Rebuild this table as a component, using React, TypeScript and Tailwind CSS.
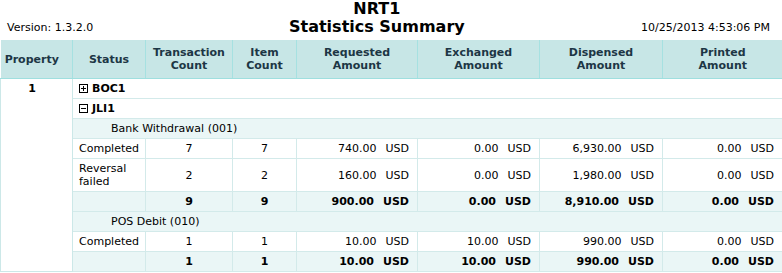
import React from "react";

const font = { fontFamily: '"DejaVu Sans", Verdana, sans-serif' };

function Box({ open }: { open: boolean }) {
  return (
    <svg width="9" height="9" viewBox="0 0 9 9" className="inline-block mr-[4px] align-[-1px]">
      <rect x="0.5" y="0.5" width="8" height="8" fill="white" stroke="#000" strokeWidth="1" />
      <line x1="2" y1="4.5" x2="7" y2="4.5" stroke="#000" strokeWidth="1" />
      {!open && <line x1="4.5" y1="2" x2="4.5" y2="7" stroke="#000" strokeWidth="1" />}
    </svg>
  );
}

type Row = { status: string; t: string; i: string; r: string; e: string; d: string; p: string };

const td = "border border-[#d3eaea] py-[3px] align-middle";

function Amount({ v, bold }: { v: string; bold?: boolean }) {
  return (
    <td className={`${td} text-right pr-[8px] ${bold ? "font-bold" : ""}`}>
      {v}
      <span className="ml-[9px]">USD</span>
    </td>
  );
}

function DataRow({ row }: { row: Row }) {
  return (
    <tr className="bg-white">
      <td className={`${td} pl-[6px] text-left`}>{row.status}</td>
      <td className={`${td} text-center`}>{row.t}</td>
      <td className={`${td} text-center`}>{row.i}</td>
      <Amount v={row.r} />
      <Amount v={row.e} />
      <Amount v={row.d} />
      <Amount v={row.p} />
    </tr>
  );
}

function TotalRow({ row }: { row: Row }) {
  return (
    <tr className="bg-[#eaf6f6] font-bold">
      <td className={`${td}`}></td>
      <td className={`${td} text-center`}>{row.t}</td>
      <td className={`${td} text-center`}>{row.i}</td>
      <Amount v={row.r} bold />
      <Amount v={row.e} bold />
      <Amount v={row.d} bold />
      <Amount v={row.p} bold />
    </tr>
  );
}

function GroupRow({ label }: { label: string }) {
  return (
    <tr className="bg-[#eaf6f6]">
      <td colSpan={7} className="border-y border-[#d3eaea] border-r border-r-[#d3eaea] py-[3px] pl-[38px]">
        {label}
      </td>
    </tr>
  );
}

export default function App() {
  const th = "border-r border-[#a6e1e1] border-b border-b-[#9fdfdf] py-[6px] font-bold text-center align-middle text-[#1d3645]";
  return (
    <div className="w-[782px] bg-white text-black text-[11px] leading-[13px]" style={font}>
      <div className="flex items-end h-[40px]">
        <div className="w-[289px] shrink-0 pl-[7px] mb-[6px]">Version: 1.3.2.0</div>
        <div className="flex flex-col items-center text-[16px] leading-[18px] font-bold pb-[4px]">
          <div>NRT1</div>
          <div>Statistics Summary</div>
        </div>
        <div className="flex-1 text-right pr-[12px] mb-[6px]">10/25/2013 4:53:06 PM</div>
      </div>
      <table className="table-fixed border-collapse w-[782px]">
        <colgroup>
          <col className="w-[72px]" />
          <col className="w-[73px]" />
          <col className="w-[87px]" />
          <col className="w-[64px]" />
          <col className="w-[121px]" />
          <col className="w-[122px]" />
          <col className="w-[123px]" />
          <col className="w-[120px]" />
        </colgroup>
        <thead>
          <tr className="bg-[#c7e6e6]">
            <th className={`${th} pr-[9px]`}>Property</th>
            <th className={th}>Status</th>
            <th className={th}>Transaction<br />Count</th>
            <th className={th}>Item<br />Count</th>
            <th className={th}>Requested<br />Amount</th>
            <th className={th}>Exchanged<br />Amount</th>
            <th className={th}>Dispensed<br />Amount</th>
            <th className={`${th} border-r-0`}>Printed<br />Amount</th>
          </tr>
        </thead>
        <tbody>
          <tr className="bg-white">
            <td rowSpan={9} className="border border-[#cce8e8] align-top text-center font-bold py-[3px] pr-[9px]">
              1
            </td>
            <td colSpan={7} className={`${td} pl-[6px] font-bold`}>
              <Box open={false} />BOC1
            </td>
          </tr>
          <tr className="bg-white">
            <td colSpan={7} className={`${td} pl-[6px] font-bold`}>
              <Box open={true} />JLI1
            </td>
          </tr>
          <GroupRow label="Bank Withdrawal (001)" />
          <DataRow row={{ status: "Completed", t: "7", i: "7", r: "740.00", e: "0.00", d: "6,930.00", p: "0.00" }} />
          <DataRow row={{ status: "Reversal failed", t: "2", i: "2", r: "160.00", e: "0.00", d: "1,980.00", p: "0.00" }} />
          <TotalRow row={{ status: "", t: "9", i: "9", r: "900.00", e: "0.00", d: "8,910.00", p: "0.00" }} />
          <GroupRow label="POS Debit (010)" />
          <DataRow row={{ status: "Completed", t: "1", i: "1", r: "10.00", e: "10.00", d: "990.00", p: "0.00" }} />
          <TotalRow row={{ status: "", t: "1", i: "1", r: "10.00", e: "10.00", d: "990.00", p: "0.00" }} />
        </tbody>
      </table>
    </div>
  );
}
